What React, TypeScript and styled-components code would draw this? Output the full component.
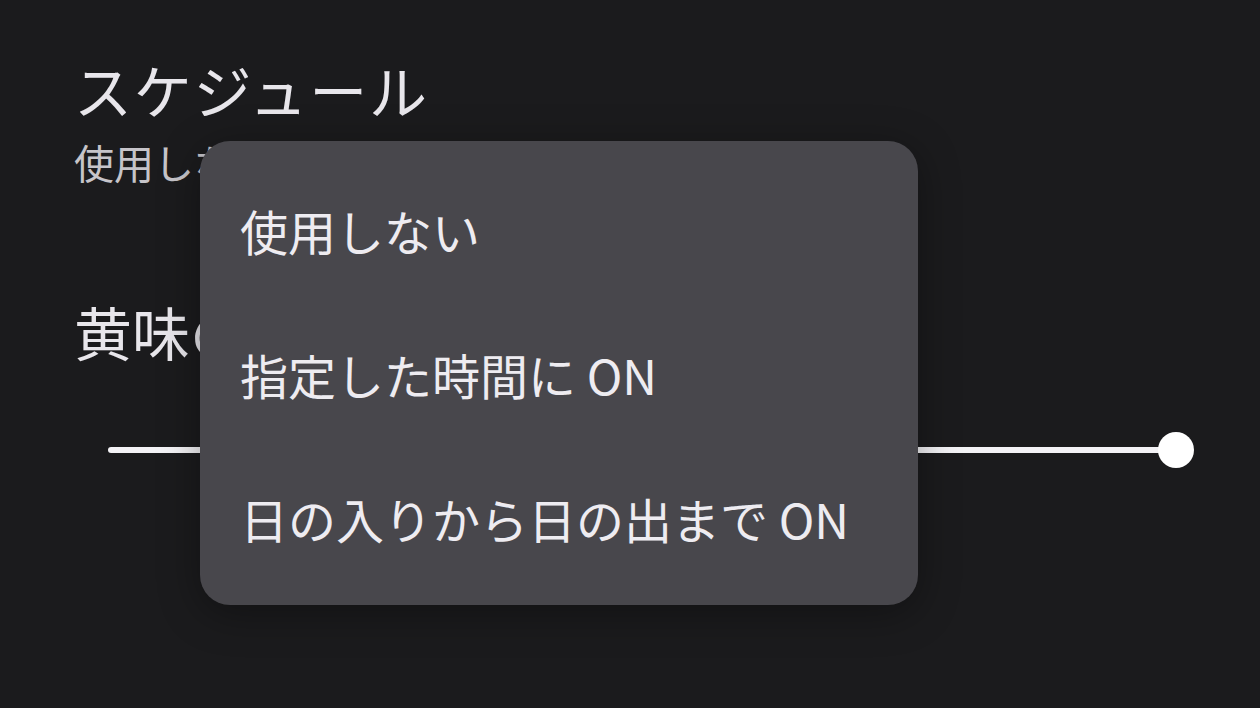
import React from "react";
import styled, { createGlobalStyle } from "styled-components";

const GlobalStyle = createGlobalStyle`
  html, body {
    margin: 0;
    padding: 0;
    background: #1b1b1d;
  }
  body {
    font-family: "Noto Sans CJK JP", "Noto Sans", sans-serif;
    color: #e8e6eb;
  }
`;

const Screen = styled.div`
  position: relative;
  width: 1260px;
  height: 708px;
  overflow: hidden;
  background: #1b1b1d;
  box-sizing: border-box;
  padding: 56px 66px 0 74px;
  display: flex;
  flex-direction: column;
`;

const Title = styled.div`
  font-size: 58px;
  line-height: 67px;
  color: #e8e6eb;
  letter-spacing: 1.8px;
`;

const Subtitle = styled.div`
  margin-top: 15px;
  font-size: 40px;
  line-height: 48px;
  color: #c6c4c9;
`;

const Label = styled.div`
  margin-top: 112px;
  font-size: 58px;
  line-height: 67px;
  color: #e8e6eb;
`;

const SliderRow = styled.div`
  margin-top: 67px;
  height: 36px;
  padding-left: 34px;
  display: flex;
  align-items: center;
`;

const Track = styled.div`
  flex: 1;
  height: 6px;
  background: #f4f3f6;
  border-radius: 3px;
`;

const Thumb = styled.div`
  width: 36px;
  height: 36px;
  border-radius: 50%;
  background: #ffffff;
  margin-left: -18px;
`;

const Menu = styled.ul`
  position: absolute;
  left: 200px;
  top: 141px;
  width: 718px;
  margin: 0;
  padding: 17px 0 15px;
  list-style: none;
  background: #48474c;
  border-radius: 30px;
  box-shadow: 0 8px 40px rgba(0, 0, 0, 0.35);
`;

const MenuItem = styled.li`
  height: 144px;
  padding-left: 40px;
  display: flex;
  align-items: center;
  font-size: 48px;
  color: #eeecf1;
`;

const options = ["使用しない", "指定した時間に ON", "日の入りから日の出まで ON"];

const App: React.FC = () => {
  return (
    <>
      <GlobalStyle />
      <Screen>
        <Title>スケジュール</Title>
        <Subtitle>使用しない</Subtitle>
        <Label>黄味の強さ</Label>
        <SliderRow>
          <Track />
          <Thumb />
        </SliderRow>
        <Menu>
          {options.map((option) => (
            <MenuItem key={option}>{option}</MenuItem>
          ))}
        </Menu>
      </Screen>
    </>
  );
};

export default App;
